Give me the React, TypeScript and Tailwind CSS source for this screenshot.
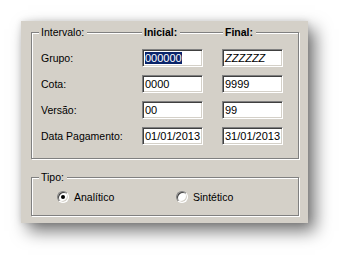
import React from "react";

const font = "font-['Liberation_Sans',Arial,sans-serif]";

const Field: React.FC<{ value: string; selected?: boolean; italic?: boolean }> = ({ value, selected, italic }) => (
	<div className="w-[61px] h-[18px] bg-white border border-t-[#808080] border-l-[#808080] border-b-white border-r-white shadow-[inset_1px_1px_0_#404040,inset_-1px_-1px_0_#d4d0c8] flex items-center pl-[2px] text-[11px] leading-[12px] text-black">
		{selected ? (
			<span className="bg-[#0a246a] text-white">{value}</span>
		) : (
			<span className={italic ? "italic" : ""}>{value}</span>
		)}
	</div>
);

const Row: React.FC<{ label: string; from: string; to: string; selected?: boolean; italic?: boolean }> = ({ label, from, to, selected, italic }) => (
	<div className="flex items-center h-[18px]">
		<div className="w-[101px] text-[10.5px] leading-[12px] text-black">{label}</div>
		<Field value={from} selected={selected} />
		<div className="w-[19px]" />
		<Field value={to} italic={italic} />
	</div>
);

const Radio: React.FC<{ checked?: boolean }> = ({ checked }) => (
	<div className="w-[12px] h-[12px] rounded-full bg-white border border-t-[#808080] border-l-[#808080] border-b-white border-r-white shadow-[inset_1px_1px_0_#404040,inset_-1px_-1px_0_#d4d0c8] flex items-center justify-center">
		{checked && <div className="w-[4px] h-[4px] rounded-full bg-black" />}
	</div>
);

const Legend: React.FC<{ left: string; bold?: boolean; children: React.ReactNode }> = ({ left, bold, children }) => (
	<div
		className={`absolute top-[-7px] ${left} bg-[#d4d0c8] pl-[2px] pr-[3px] text-[10.5px] leading-[12px] text-black ${bold ? "font-bold" : ""}`}
	>
		{children}
	</div>
);

export default function App() {
	return (
		<div className={`w-[350px] h-[265px] bg-white pt-[21px] pl-[21px] ${font}`}>
			<div className="w-[287px] h-[202px] bg-[#d4d0c8] shadow-[7px_8px_16px_rgba(0,0,0,0.55),0_0_6px_rgba(0,0,0,0.12)] pt-[11px] pl-[10px] flex flex-col gap-[18px]">
				<div className="relative w-[268px] h-[127px] border border-[#808080] shadow-[inset_1px_1px_0_#fff,1px_1px_0_#fff] pt-[16px] pl-[9px] flex flex-col gap-[8px]">
					<Legend left="left-[7px]">Intervalo:</Legend>
					<Legend left="left-[110px]" bold>Inicial:</Legend>
					<Legend left="left-[191px]" bold>Final:</Legend>
					<Row label="Grupo:" from="000000" to="ZZZZZZ" selected italic />
					<Row label="Cota:" from="0000" to="9999" />
					<Row label="Versão:" from="00" to="99" />
					<Row label="Data Pagamento:" from="01/01/2013" to="31/01/2013" />
				</div>
				<div className="relative w-[268px] h-[39px] border border-[#808080] shadow-[inset_1px_1px_0_#fff,1px_1px_0_#fff] pl-[25px] flex items-center">
					<Legend left="left-[7px]">Tipo:</Legend>
					<div className="w-[119px] flex items-center gap-[5px] text-[10.5px] leading-[12px] text-black">
						<Radio checked />
						<span>Analítico</span>
					</div>
					<div className="flex items-center gap-[5px] text-[10.5px] leading-[12px] text-black">
						<Radio />
						<span>Sintético</span>
					</div>
				</div>
			</div>
		</div>
	);
}
